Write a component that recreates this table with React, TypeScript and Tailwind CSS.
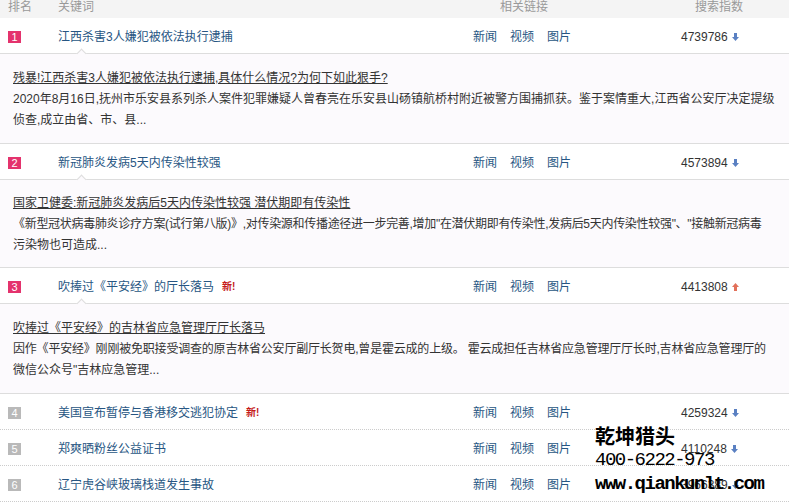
import React from "react";

type Line = { text: string; cls?: string };

type Item = {
  rank: number;
  title: string;
  index: string;
  trend: "up" | "down";
  isNew?: boolean;
  detail?: { title: string; lines: Line[]; pad: string };
};

const items: Item[] = [
  {
    rank: 1,
    title: "江西杀害3人嫌犯被依法执行逮捕",
    index: "4739786",
    trend: "down",
    detail: {
      title: "残暴!江西杀害3人嫌犯被依法执行逮捕,具体什么情况?为何下如此狠手?",
      lines: [
        { text: "2020年8月16日,抚州市乐安县系列杀人案件犯罪嫌疑人曾春亮在乐安县山砀镇航桥村附近被警方围捕抓获。鉴于案情重大,江西省公安厅决定提级" },
        { text: "侦查,成立由省、市、县..." },
      ],
      pad: "pt-[14px] pb-[12px]",
    },
  },
  {
    rank: 2,
    title: "新冠肺炎发病5天内传染性较强",
    index: "4573894",
    trend: "down",
    detail: {
      title: "国家卫健委:新冠肺炎发病后5天内传染性较强 潜伏期即有传染性",
      lines: [
        {
          text: "《新型冠状病毒肺炎诊疗方案(试行第八版)》,对传染源和传播途径进一步完善,增加\"在潜伏期即有传染性,发病后5天内传染性较强\"、\"接触新冠病毒",
          cls: "tracking-[-0.3px]",
        },
        { text: "污染物也可造成..." },
      ],
      pad: "pt-[13px] pb-[11px]",
    },
  },
  {
    rank: 3,
    title: "吹捧过《平安经》的厅长落马",
    index: "4413808",
    trend: "up",
    isNew: true,
    detail: {
      title: "吹捧过《平安经》的吉林省应急管理厅厅长落马",
      lines: [
        {
          text: "因作《平安经》刚刚被免职接受调查的原吉林省公安厅副厅长贺电,曾是霍云成的上级。 霍云成担任吉林省应急管理厅厅长时,吉林省应急管理厅的",
          cls: "tracking-[-0.2px]",
        },
        { text: "微信公众号\"吉林应急管理..." },
      ],
      pad: "pt-[14px] pb-[12px]",
    },
  },
  { rank: 4, title: "美国宣布暂停与香港移交逃犯协定", index: "4259324", trend: "down", isNew: true },
  { rank: 5, title: "郑爽晒粉丝公益证书", index: "4110248", trend: "down" },
  { rank: 6, title: "辽宁虎谷峡玻璃栈道发生事故", index: "3966389", trend: "down" },
];

function Arrow({ trend }: { trend: "up" | "down" }) {
  if (trend === "up") {
    return (
      <svg width="7" height="8" viewBox="0 0 7 8" className="ml-[4px]">
        <path d="M3.5 0L7 4H5v4H2V4H0z" fill="#e2705a" />
      </svg>
    );
  }
  return (
    <svg width="7" height="8" viewBox="0 0 7 8" className="ml-[4px]">
      <path d="M2 0h3v4h2L3.5 8 0 4h2z" fill="#5a80c2" />
    </svg>
  );
}

function Row({ item }: { item: Item }) {
  const top = item.rank <= 3;
  return (
    <>
      <div
        className={`relative flex h-[36px] items-center pt-[3px] ${
          top ? "border-b border-[#dddddd]" : "border-b border-dotted border-[#cccccc]"
        }`}
      >
        <div className="w-[58px] pl-[8px]">
          <span
            className={`flex h-[12px] w-[13px] items-center justify-center text-[11px] leading-none text-white ${
              top ? "bg-[#e4336d]" : "bg-[#b9b9b9]"
            }`}
          >
            {item.rank}
          </span>
        </div>
        <div className="flex w-[415px] items-center">
          <span className="text-[12px] text-[#275683]">{item.title}</span>
          {item.isNew && (
            <span className="ml-[8px] text-[10px] font-bold leading-none text-[#c41a1a]">新!</span>
          )}
        </div>
        <div className="flex w-[208px] gap-[13px] text-[12px] text-[#275683]">
          <span>新闻</span>
          <span>视频</span>
          <span>图片</span>
        </div>
        <div className="flex items-center text-[12px] text-[#333333]">
          <span>{item.index}</span>
          <Arrow trend={item.trend} />
        </div>
        {item.detail && (
          <div className="absolute bottom-[-4px] left-[78px] z-10 h-[7px] w-[7px] rotate-45 border-l border-t border-[#dddddd] bg-[#fcfafd]" />
        )}
      </div>
      {item.detail && (
        <div
          className={`border-b border-[#dddddd] bg-[#fcfafd] px-[13px] text-[12px] leading-[21px] text-[#333333] ${item.detail.pad}`}
        >
          <div className="whitespace-nowrap underline">{item.detail.title}</div>
          {item.detail.lines.map((l) => (
            <div key={l.text} className={`whitespace-nowrap ${l.cls ?? ""}`}>
              {l.text}
            </div>
          ))}
        </div>
      )}
    </>
  );
}

export default function App() {
  return (
    <div className="relative h-[503px] w-[789px] overflow-hidden bg-white font-['Liberation_Sans','Noto_Sans_CJK_SC',sans-serif]">
      {/* header */}
      <div className="flex h-[18px] bg-[#f4f4f4] text-[12px] leading-[14px] text-[#999999]">
        <div className="w-[58px] pl-[8px]">排名</div>
        <div className="w-[442px]">关键词</div>
        <div className="w-[195px]">相关链接</div>
        <div>搜索指数</div>
      </div>

      {items.map((it) => (
        <Row key={it.rank} item={it} />
      ))}

      {/* watermark */}
      <div className="absolute left-[595px] top-[424px] z-20 text-black">
        <div className="text-[20px] font-bold leading-[24px] font-['Noto_Sans_CJK_SC',sans-serif]">乾坤猎头</div>
        <div className="text-[19px] leading-[24px] tracking-[-1.5px] font-['Liberation_Mono',monospace]">400-6222-973</div>
        <div className="text-[19px] font-bold leading-[24px] tracking-[-1.5px] font-['Liberation_Mono',monospace]">www.qiankunlt.com</div>
      </div>
    </div>
  );
}
